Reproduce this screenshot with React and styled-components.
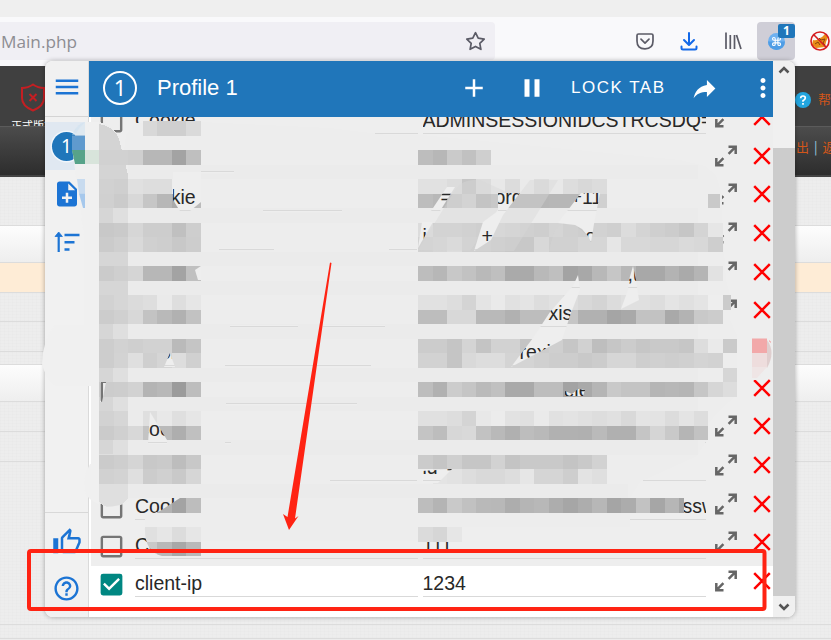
import React from 'react';
import styled, { createGlobalStyle } from 'styled-components';
import {
  MdMenu, MdNoteAdd, MdOutlineThumbUp, MdHelpOutline, MdAdd, MdPause,
  MdReply, MdMoreVert, MdCheckBox, MdCheckBoxOutlineBlank,
} from 'react-icons/md';

const Global = createGlobalStyle`
  * { box-sizing: border-box; }
  body { margin: 0; overflow: hidden; font-family: "Liberation Sans", Arial, sans-serif; }
  svg { display: block; flex: none; }
`;

const Screen = styled.div`
  position: relative;
  width: 831px;
  height: 640px;
  overflow: hidden;
  display: flex;
  flex-direction: column;
  background: #ececec;
`;

/* Browser chrome */
const TabStrip = styled.div`
  flex: none;
  height: 17px;
  background: #efefef;
`;
const BrowserBar = styled.div`
  flex: none;
  height: 49px;
  padding-top: 5px;
  display: flex;
  align-items: flex-start;
  background: #f9f9fb;
`;
const UrlField = styled.div`
  flex: none;
  width: 495px;
  height: 38px;
  margin-right: 128px;
  padding: 0 9px 0 1px;
  display: flex;
  align-items: center;
  justify-content: space-between;
  border-radius: 0 4px 4px 0;
  background: #f0eff4;
  color: #8d8d92;
  font: 17.2px "Open Sans", "Noto Sans", sans-serif;
`;
const BarButton = styled.div`
  flex: none;
  position: relative;
  width: ${(p) => p.$w || 44}px;
  height: 38px;
  display: flex;
  align-items: center;
  justify-content: center;
  border-radius: 4px;
  background: ${(p) => (p.$active ? '#cfced7' : 'transparent')};
  margin-right: ${(p) => p.$gap || 0}px;
`;
const Badge = styled.span`
  position: absolute;
  top: 2px;
  right: 0;
  width: 17px;
  height: 14px;
  border-radius: 2px;
  background: #2076ba;
  color: #fff;
  font: bold 12px/14px "Open Sans", sans-serif;
  text-align: center;
`;

/* Web page behind the popup */
const SiteTop = styled.div`
  flex: none;
  height: 60px;
  display: flex;
  justify-content: space-between;
  background: #404040;
  overflow: hidden;
`;
const Edition = styled.div`
  width: 66px;
  padding-top: 17px;
  display: flex;
  flex-direction: column;
  align-items: center;
  gap: 5px;
  color: #fff;
  font: 11px "Noto Sans CJK SC", sans-serif;
  line-height: 16px;
`;
const HelpLink = styled.div`
  width: 36px;
  padding-top: 21px;
  display: flex;
  gap: 7px;
  white-space: nowrap;
  color: #d2561a;
  font: 13px/24px "Noto Sans CJK SC", sans-serif;
  svg { margin-top: 5px; }
`;
const SiteNav = styled.div`
  flex: none;
  height: 51px;
  display: flex;
  justify-content: flex-end;
  border-top: 1px solid #5b5b5b;
  border-bottom: 2px solid #444;
  background: linear-gradient(#4c4c4c, #2d2d2d);
`;
const NavLinks = styled.div`
  width: 35px;
  height: 40px;
  overflow: hidden;
  display: flex;
  gap: 5px;
  white-space: nowrap;
  color: #d2561a;
  font: 13px/39px "Noto Sans CJK SC", sans-serif;
  i { font-style: normal; color: #9ccfe2; }
`;
const Band = styled.div`
  flex: none;
  height: ${(p) => p.$h}px;
  border-bottom: 1px solid #dcdcdc;
  background: ${(p) =>
    p.$tone === 'title' ? 'linear-gradient(#fdfdfd, #eeeeee)'
      : p.$tone === 'warn' ? '#feecd6'
      : 'repeating-linear-gradient(90deg, rgba(0,0,0,.008) 0 1px, transparent 1px 4px), repeating-linear-gradient(rgba(0,0,0,.008) 0 1px, transparent 1px 3px), #ededed'};
`;

/* Extension popup */
const Popup = styled.div`
  position: absolute;
  left: 45px;
  top: 61px;
  width: 750px;
  height: 556px;
  display: flex;
  overflow: hidden;
  border-radius: 8px;
  background: #fff;
  box-shadow: 0 0 5px rgba(0, 0, 0, .32);
`;
const Sidebar = styled.div`
  flex: none;
  width: 44px;
  display: flex;
  flex-direction: column;
  background: #f1f1f1;
  border-right: 1px solid #dadada;
  color: #1c74d4;
`;
const SideItem = styled.div`
  flex: none;
  height: ${(p) => p.$h || 48}px;
  display: flex;
  align-items: center;
  justify-content: center;
  background: ${(p) => (p.$selected ? '#e0e8f1' : 'transparent')};
  border-bottom: ${(p) => (p.$line ? '1px solid #d4d4d4' : '0')};
  padding-bottom: ${(p) => p.$up || 0}px;
  margin-bottom: ${(p) => p.$after || 0}px;
`;
const SideFooter = styled.div`
  margin-top: auto;
  height: 105px;
  padding-top: 5px;
  border-top: 1px solid #d8d8d8;
`;
const ProfileDot = styled.div`
  width: 29px;
  height: 29px;
  border-radius: 50%;
  box-shadow: 0 0 0 1.5px #f1f6fb;
  background: #2076ba;
  color: #fff;
  font: 19px/29px "Noto Sans", sans-serif;
  text-align: center;
`;
const Main = styled.div`
  flex: none;
  width: 684px;
  display: flex;
  flex-direction: column;
`;
const Header = styled.div`
  flex: none;
  height: 56px;
  padding-bottom: 2px;
  display: flex;
  align-items: center;
  background: #2076ba;
  color: #fff;
`;
const HeaderDot = styled.div`
  width: 34px;
  height: 34px;
  margin: 0 20px 0 14px;
  border: 2px solid #fff;
  border-radius: 50%;
  font: 22px/29px "Noto Sans", sans-serif;
  text-align: center;
`;
const Title = styled.div`
  flex: 1;
  font-size: 22px;
`;
const Actions = styled.div`
  display: flex;
  align-items: center;
  margin-right: -5px;
`;
const LockTab = styled.span`
  width: 100px;
  margin: 0 19px 0 24px;
  white-space: nowrap;
  font-size: 17px;
  letter-spacing: 1.5px;
`;
const ActionIcon = styled.div`
  display: flex;
  margin-right: ${(p) => p.$gap || 0}px;
  transform: ${(p) => (p.$flip ? 'scaleX(-1)' : 'none')};
`;
const List = styled.div`
  flex: 1;
  min-height: 0;
  padding: 0 0 12px 2px;
  overflow: hidden;
  display: flex;
  flex-direction: column;
  justify-content: flex-end;
`;
const Row = styled.div`
  flex: none;
  height: 38.65px;
  padding: 4px 0 0 6px;
  display: flex;
  background: ${(p) => (p.$on ? '#fff' : '#eeeeee')};
  color: ${(p) => (p.$on ? '#008782' : '#757575')};
`;
const Field = styled.div`
  flex: none;
  width: 283px;
  height: 27px;
  margin-right: 4.5px;
  display: flex;
  overflow: hidden;
  white-space: pre;
  border-bottom: 1px solid #d9d9d9;
  color: #282828;
  font-size: 19.5px;
  line-height: 27px;
`;
const Check = styled.div`
  width: 38px;
`;
const Piece = styled.span`
  flex: none;
  width: ${(p) => p.$w}px;
`;
const RowIcon = styled.div`
  margin: -1.5px ${(p) => p.$gap || 0}px 0 ${(p) => p.$before || 0}px;
`;
const Scrollbar = styled.div`
  width: 22px;
  display: flex;
  flex-direction: column;
  align-items: center;
  background: #f0f0f0;
`;
const ScrollArrow = styled.div`
  height: 21px;
  padding-top: ${(p) => (p.$down ? 7 : 5)}px;
`;
const Thumb = styled.div`
  width: 22px;
  height: 448px;
  margin-top: 66px;
  background: #cccccc;
`;
const Overlay = styled.svg`
  position: absolute;
  inset: 0;
`;

const Chevron = ({ down }) => (
  <svg width="12" height="9" viewBox="0 0 12 9">
    <path d={down ? 'M1.5 1.5 6 6l4.5-4.5' : 'M1.5 6.5 6 2l4.5 4.5'} fill="none" stroke="#555" strokeWidth="2.6" />
  </svg>
);
const Expand = () => (
  <svg width="24" height="24" viewBox="0 0 24 24" fill="none" stroke="#666" strokeWidth="2.5">
    <path d="M14.500 2.700H21.700V9.900M21.300 3.100 14.600 9.800M2.300 14.100V21.300H9.500M2.700 20.900 9.400 14.200" />
  </svg>
);
const Cross = () => (
  <svg width="18" height="24" viewBox="0 0 18 24" fill="none" stroke="#ff0000" strokeWidth="2.5">
    <path d="M1.200 4.200 16.800 19.800M16.800 4.200 1.200 19.800" />
  </svg>
);
const SortIcon = () => (
  <svg width="26" height="24" viewBox="0 0 26 24" fill="none" stroke="#1c74d4">
    <path d="M4.7 22V4" strokeWidth="2.2" />
    <path d="M1 6.5 4.7 2 8.4 6.5Z" fill="#1c74d4" strokeWidth=".8" />
    <path d="M10.5 5H25.5M10.5 12.2H20.5M10.5 19.6H15.5" strokeWidth="2.5" />
  </svg>
);

const rows = [
  ['Cookie', [['ADMINSESSIONIDCSTRCSDQ=', 290]]],
  ['Cookie', []],
  ['Cookie', [['', 18], ['=1', 54], ['ord', 76], ['+11', 40]]],
  ['Cookie', [['j', 59], ['+', 93], ['po', 40]]],
  ['Cookie', [['', 205], [',u', 40]]],
  ['Cookie', [['', 126], ['xis', 40]]],
  ['Cookie', [['', 97], ['rexis', 60]]],
  ['Cookie', [['', 141], ['ele', 60]]],
  ['Cookie', []],
  ['Cookie', [['id', 24], ['=', 20]]],
  ['Cookie', [['', 260], ['ssw', 50]]],
  ['Cookie', [['111', 50]]],
  ['client-ip', [['1234', 60]], true],
];

/* Pixelation tiles: band index, first column, gray level of each tile */
const tiles = [
  [-2, 3, 'd8 cf cf da'],
  [0, 0, 'd1 d1 cf b7 b7 a3 bf'], [2, 0, 'd1 cf e0 dd dd'], [3, 0, 'd0 cb d8 c6 b7 aa bb'],
  [5, 0, 'c8 ca d6 cd cd c0 ce'], [6, 0, 'cb cf d9 d0 ce c8 cd'], [8, 0, 'cb cf d5 b7 b7 a3 c0'],
  [10, 0, 'd2 d6 db de ea de e6'], [11, 0, 'cc d0 d8 c3 b9 b1 c2'], [13, 0, 'cd d2 cf d2 d2 ba c5'],
  [14, 0, 'cd d3 df cf d5 dd d0'], [16, 0, 'cc cd d2 b4 b8 9b bd'], [18, 0, 'd2 d6 eb df e8 df e6'],
  [19, 0, 'cb d0 d8 c3 ba ae c0'], [21, 0, 'cb ce d5 c8 ca bd c8'], [22, 0, 'd1 d3 df cc d0 c9 d6'],
  [24, 4, 'b2 a3 bd'], [26, 3, 'e0 e6 dc e6'], [27, 3, 'c9 b8 a8 b9'],
  [0, 22, 'bd b7 ca c1 cf'],
  [2, 22, 'e1 e1 dc c6 dc e8 dc ea dd e8 dd d8 dc'],
  [3, 22, 'bd b8 c8 d0 b8 be b6 b6 b6 b7 b7 c0 d0'], [3, 42, 'c9'],
  [5, 22, 'dc d0 d0 ce ca d8 d4 d0 ce d4 cc c8 d2 cf dc d4 cf cc c6 d4 e6'],
  [6, 22, 'd2 d6 dd d0 cf cc c8 c8 d8 ce ce d6 d6 e6 d8 d8 d6 d6 da d8 ce'],
  [8, 22, 'bd b7 c8 c2 b9 bf aa aa b9 bf a3 a8 b8 c6 b7 a8 a8 b3 aa b5 e2'],
  [10, 22, 'e1 e1 dd d4 e4 ea e1 e4 dd e1 dd d8 d4 dc e0 e0 dd e4 e0 e4 ee cb'],
  [11, 22, 'bd bd d8 d8 b9 b9 b1 bd bd ba c5 b1 b1 a5 a9 c2 c2 a9 b3 c9 cc'],
  [13, 22, 'cc cc c5 d4 c4 d2 d2 c4 cc cf c6 d1 be c6 cc c6 c9 c9 c6 dd ea ca'],
  [14, 22, 'd2 d2 c5 d9 dd dd d4 d4 d0 cd cd c9 cc d6 d6 ce d0 ce d0 d4 d2'], [15, 43, 'd6'],
  [16, 22, 'bd b1 cc c5 ba c0 a9 a9 bd bd a3 a9 b5 c9 c4 c4 b5 b7 b5 c6 d6 dd'],
  [18, 22, 'e0 e0 dd d4 e8 ec e2 e0 ea e1 e3 e0 dd e0 d9 e4 e3 dc e4 dd'],
  [19, 22, 'c4 bd d7 d9 c2 b9 b0 bd b9 b1 b1 b0 ba b0 b0 c5 d5 c9 b5 c2'],
  [21, 22, 'cb c5 cf c6 c6 d2 c4 c9 c9 c9 c4 c9 d2'],
  [22, 23, 'e4 e2 dd d9 d9 dd e6 d5 d5 ce e3 df'],
  [24, 22, 'bd b4 c9 c1 b9 b8 ad b5 b8 ad a6 ad b7 a5 ac c2 a6 b6 a4'],
  [26, 22, 'db d6 e6'],
];
/* Tiles cut short by the brush edge, keyed by band-column */
const cutTiles = { '24-40': 5, '10-43': 8, '3-42': 12 };

/* Spots where the redaction lets the rows through */
const gaps = [
  '447,187 455,187 440,211 431,211', '422,222 433,222 418,248',
  '498,193 520,193 503,215 491,240 474,251 483,222 498,211',
  '581,193 600,193 594,224 591,242 588,236 582,229 575,225 558,223',
  '578,275 580,290 571,313 562,340 511,367 533,338 550,312 573,286',
  '633,266 636,280 639,300 621,309 628,290 629,280',
  '565,391 572,394 578,389 585,390 583,396 565,396',
  '170,353 164,367 175,367', '150,412 167,440 167,444 148,444',
  '100,382 106,382 102,402 100,402',
  '173,172 201,172 201,202 190,211 180,211 173,200',
  '201,266 195,270 198,280 201,280', '422,471 452,469 438,483 422,483',
];
const lines = [
  [387, 133, 30], [201, 171, 33], [263, 210, 79], [219, 248, 55], [389, 248, 28],
  [230, 325, 68], [323, 325, 62], [225, 364, 146], [226, 403, 131], [225, 442, 6],
  [330, 480, 87], [643, 480, 62],
];

const Redaction = () => (
  <Overlay width="831" height="640" viewBox="0 0 831 640">
    <defs>
      <mask id="gaps" maskUnits="userSpaceOnUse" x="0" y="0" width="831" height="640">
        <rect width="831" height="640" fill="#fff" />
        {gaps.map((g) => <polygon key={g} points={g} />)}
        {lines.map(([x, y, w]) => <rect key={`${x}-${y}`} x={x} y={y} width={w} height="2.5" />)}
        <path d="M99 507Q120 508 138 498H180L160 511 145 516H99ZM145 527Q144 552 162 556H140V527Z" />
      </mask>
    </defs>
    <path fill="#f0f0f0" d="M85 122Q70 135 73 155L84 235V325H55Q42 342 42 364 45 377 55 386H91V464H90Q84 475 84 485 85 500 99 504V122Z" />
    <g mask="url(#gaps)" shapeRendering="crispEdges">
      <path fill="#ededed" d="M99 122Q112 124 119 137L123 160 126 135 135 123 201 122 330 128 387 135H422L680 160 705 166 716 175 722 195V222L726 280 730 295V320L737 335V395L720 410 707 425V440L697 456 640 482 630 498V527H418V541H201V556H162L145 540V514H138V498L120 506 99 504Z" />
      {[1, 4, 7, 9, 12, 15, 17, 20, 23].map((n) => (
        <rect key={n} x="128" y={150 + n * 14.5} width={n > 20 ? 500 : 570} height="14.5" fill="#ebebeb" />
      ))}
      <path fill="#d4d4d4" d="M99 124Q117 127 120 143L128 175V236H99Z" />
      <path fill="#dfdfdf" d="M99 208H128V498L120 506Q104 510 99 501Z" />
      <path fill="#d6d6d6" d="M99 208H113V454H99ZM113 251H128V295H113Z" />
      {tiles.map(([band, col, grays]) => grays.split(' ').map((g, i) => (
        <rect key={`${band}-${col}-${i}`} x={99 + (col + i) * 14.5} y={150 + band * 14.5}
          width={cutTiles[`${band}-${col + i}`] || 14.5} height="14.5" fill={`#${g}${g}${g}`} />
      )))}
      <path fill="#d6d6d6" opacity=".4" shapeRendering="auto" d="M418 250 455 190Q463 178 480 180L509 193 470 251ZM510 206 530 180H558L514 251H474ZM553 236Q558 220 575 225L588 236V251H549Z" />
    </g>
    <path fill="#ccdff0" d="M74 131Q78 124 85 122V135H72Z" opacity=".5" />
    <path fill="#5f9ace" d="M72 135.500H85V150H72Z" />
    <path fill="#57a389" d="M72 150H85V164H75Z" />
    <path fill="#d8e4db" d="M85 150H99V164H85Z" />
    <path fill="#c8dbef" d="M77 179H85V193.500H79Z" />
    <path fill="#a6c8ec" d="M79 193.500H85V208H83Z" />
    <path fill="#eeeeee" d="M752 338H768Q775 350 770 364L757 380H752Z" />
    <path fill="#f2a8a9" d="M752 338.500H767V353H752Z" />
    <path fill="#eedddd" d="M752 353H767V367.500H752Z" />
    <path fill="#efe5e5" d="M752 367H767L757 378H752Z" />
    <path fill="#dfcece" d="M767 340Q776 352 767 368Z" />
  </Overlay>
);

const Annotation = () => (
  <Overlay width="831" height="640" viewBox="0 0 831 640" fill="#ff2313">
    <path d="M330 262.500 331.500 263 295 518.500 298.500 516 289 530 283 514 287.500 517Z" />
    <rect x="29" y="551" width="735.500" height="58" rx="2" fill="none" stroke="#ff2313" strokeWidth="4" />
  </Overlay>
);

export default function App() {
  return (
    <Screen>
      <Global />
      <TabStrip />
      <BrowserBar>
        <UrlField>
          <span>Main.php</span>
          <svg width="21" height="21" viewBox="0 0 21 21" fill="none" stroke="#5b5b66" strokeWidth="1.7" strokeLinejoin="round">
            <path d="m10.500 1.700 2.700 5.500 6 .9-4.400 4.200 1.100 6-5.400-2.900-5.400 2.900 1.100-6L1.800 8.100l6-.9Z" />
          </svg>
        </UrlField>
        <BarButton>
          <svg width="18" height="17" viewBox="0 0 18 17" fill="none" stroke="#5b5b66" strokeWidth="1.700" strokeLinecap="round" strokeLinejoin="round">
            <path d="M2.500 1h13Q17 1 17 2.500V8Q17 15.800 9 15.800T1 8V2.500Q1 1 2.500 1ZM5 6.200l4 3.900 4-3.900" />
          </svg>
        </BarButton>
        <BarButton $w={43}>
          <svg width="18" height="20" viewBox="0 0 18 20" fill="none" stroke="#1268e8" strokeWidth="2" strokeLinecap="round" strokeLinejoin="round">
            <path d="M9 2V13.500M4 9l5 5 5-5M1.500 15.500V17Q1.500 18.500 3 18.500H15Q16.500 18.500 16.500 17V15.500" />
          </svg>
        </BarButton>
        <BarButton $w={46} $gap={1}>
          <svg width="18" height="18" viewBox="0 0 18 18" fill="none" stroke="#5b5b66" strokeWidth="1.700">
            <path d="M2 .5V17M6.300 3V17M10.500 3V17M12.500 3 17 17" />
          </svg>
        </BarButton>
        <BarButton $w={38} $active>
          <svg width="17" height="17" viewBox="0 0 24 24">
            <circle cx="12" cy="12" r="12" fill="#6eb1f0" /><path d="M0 12a12 12 0 0 0 24 0Z" fill="#4f9de5" />
            <path transform="translate(4.500 4.500) scale(.63)" d="M18 3a3 3 0 0 0-3 3v12a3 3 0 1 0 3-3H6a3 3 0 1 0 3 3V6a3 3 0 1 0-3 3h12a3 3 0 1 0 0-6" fill="none" stroke="#fff" strokeWidth="2.500" />
          </svg>
          <Badge>1</Badge>
        </BarButton>
        <BarButton $w={49}>
          <svg width="20" height="20" viewBox="0 0 20 20">
            <path d="M3 9Q6 10 8 8L12 6 15 3 18 6 16 11 15 16 6 17 2 14Z" fill="#e98b18" />
            <path d="m9 7 2 2 4-1-2 4 2 2M5 13l3-2 2 3" fill="none" stroke="#8a430d" strokeWidth="1" />
            <path d="M3.500 3.500 16.500 16.500" stroke="#d51d20" strokeWidth="1.600" />
            <circle cx="10" cy="10" r="9" fill="none" stroke="#d51d20" strokeWidth="1.600" />
          </svg>
        </BarButton>
      </BrowserBar>
      <SiteTop>
        <Edition>
          <svg width="26" height="29" viewBox="0 0 26 29" fill="none" stroke="#c51e22" strokeWidth="2">
            <path d="M13 1.500Q18 5 24 5V15Q24 23 13 27.500 2 23 2 15V5Q8 5 13 1.500ZM9.500 11l7 7M16.500 11l-7 7" />
          </svg>
          正式版本
        </Edition>
        <HelpLink>
          <svg width="16" height="16" viewBox="0 0 16 16">
            <circle cx="8" cy="8" r="8" fill="#22a5df" />
            <path d="M5.700 6.200Q5.700 4 8 4t2.300 2Q10.300 7.300 8 8.700V9.700M8 11V12.800" fill="none" stroke="#fff" strokeWidth="1.700" />
          </svg>
          帮助
        </HelpLink>
      </SiteTop>
      <SiteNav><NavLinks>出<i>|</i>返回</NavLinks></SiteNav>
      <Band $h={49} />
      <Band $h={37} $tone="title" />
      <Band $h={30} $tone="warn" />
      <Band $h={29} />
      <Band $h={30} />
      <Band $h={13} />
      <Band $h={37} $tone="title" />
      <Band $h={30} />
      <Band $h={30} />
      <Band $h={163} />
      <Band $h={14} />
      <Popup>
        <Sidebar>
          <SideItem $h={56} $up={4} $line $after={5}><MdMenu size={30} /></SideItem>
          <SideItem $selected><ProfileDot>1</ProfileDot></SideItem>
          <SideItem><MdNoteAdd size={30} /></SideItem>
          <SideItem $up={1}><SortIcon /></SideItem>
          <SideFooter>
            <SideItem><MdOutlineThumbUp size={30} /></SideItem>
            <SideItem $up={3}><MdHelpOutline size={29} /></SideItem>
          </SideFooter>
        </Sidebar>
        <Main>
          <Header>
            <HeaderDot>1</HeaderDot>
            <Title>Profile 1</Title>
            <Actions>
              <ActionIcon $gap={28}><MdAdd size={30} /></ActionIcon>
              <ActionIcon><MdPause size={30} /></ActionIcon>
              <LockTab>LOCK TAB</LockTab>
              <ActionIcon $flip $gap={29}><MdReply size={29} /></ActionIcon>
              <ActionIcon><MdMoreVert size={30} /></ActionIcon>
            </Actions>
          </Header>
          <List>
            {rows.map(([name, pieces, on], i) => (
              <Row key={i} $on={on}>
                <Check>{on ? <MdCheckBox size={29} /> : <MdCheckBoxOutlineBlank size={29} />}</Check>
                <Field>{name}</Field>
                <Field>{pieces.map(([text, w], n) => <Piece key={n} $w={w}>{text}</Piece>)}</Field>
                <RowIcon $before={4} $gap={15}><Expand /></RowIcon>
                <RowIcon><Cross /></RowIcon>
              </Row>
            ))}
          </List>
        </Main>
        <Scrollbar>
          <ScrollArrow><Chevron /></ScrollArrow>
          <Thumb />
          <ScrollArrow $down><Chevron down /></ScrollArrow>
        </Scrollbar>
      </Popup>
      <Redaction />
      <Annotation />
    </Screen>
  );
}
